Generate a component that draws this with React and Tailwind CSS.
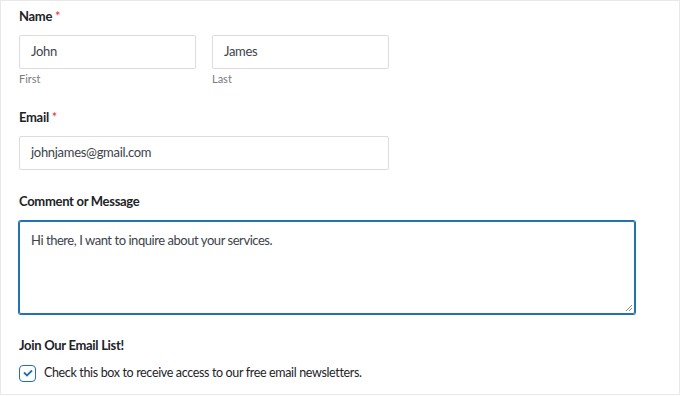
import React from "react";

export default function App() {
  const font = { fontFamily: "Lato, 'Noto Sans', sans-serif" };
  return (
    <div className="w-[680px] h-[396px] bg-white overflow-hidden" style={font}>
      <div className="h-[395px] w-[680px] border border-[#e8e8e8] pl-[18px] pt-[7px]">
        <div className="text-[13px] font-bold text-[#1d2327] leading-[16px] tracking-[-0.3px]">
          Name <span className="text-[#d63638] font-normal">*</span>
        </div>
        <div className="flex gap-[16px] mt-[11px]">
          <div className="flex flex-col">
            <div className="w-[177px] h-[34px] border border-[#dcdcde] rounded-[2px] flex items-center px-[11px] text-[13px] tracking-[-0.3px] text-[#3c434a]">John</div>
            <div className="text-[11px] text-[#787c82] mt-[3px] leading-[14px]">First</div>
          </div>
          <div className="flex flex-col">
            <div className="w-[177px] h-[34px] border border-[#dcdcde] rounded-[2px] flex items-center px-[11px] text-[13px] tracking-[-0.3px] text-[#3c434a]">James</div>
            <div className="text-[11px] text-[#787c82] mt-[3px] leading-[14px]">Last</div>
          </div>
        </div>
        <div className="text-[13px] font-bold text-[#1d2327] leading-[16px] tracking-[-0.3px] mt-[23px]">
          Email <span className="text-[#d63638] font-normal">*</span>
        </div>
        <div className="w-[370px] h-[34px] mt-[11px] border border-[#dcdcde] rounded-[2px] flex items-center px-[11px] text-[13px] tracking-[-0.3px] text-[#3c434a]">
          johnjames@gmail.com
        </div>
        <div className="text-[13px] font-bold text-[#1d2327] leading-[16px] tracking-[-0.3px] mt-[23px]">Comment or Message</div>
        <div className="relative w-[616px] h-[93px] mt-[12px] border border-[#2271b1] shadow-[0_0_0_1px_#2271b1] rounded-[2px] px-[11px] pt-[9px] text-[13px] tracking-[-0.45px] text-[#3c434a]">
          Hi there, I want to inquire about your services.
          <svg className="absolute right-[1px] bottom-[1px]" width="9" height="9" viewBox="0 0 9 9">
            <path d="M8 2 L2 8 M8 5 L5 8" stroke="#888" strokeWidth="1" />
          </svg>
        </div>
        <div className="text-[13px] font-bold text-[#1d2327] leading-[16px] tracking-[-0.3px] mt-[23px]">Join Our Email List!</div>
        <div className="flex items-center gap-[8px] mt-[11px]">
          <div className="w-[17px] h-[17px] border-[1.5px] border-[#2271b1] rounded-[4px] flex items-center justify-center">
            <svg width="12" height="12" viewBox="0 0 12 12">
              <path d="M2 5.5 L5 8.5 L10 3.5" stroke="#2271b1" strokeWidth="1.8" fill="none" />
            </svg>
          </div>
          <span className="text-[12.5px] tracking-[-0.35px] text-[#1d2327]">Check this box to receive access to our free email newsletters.</span>
        </div>
      </div>
    </div>
  );
}
